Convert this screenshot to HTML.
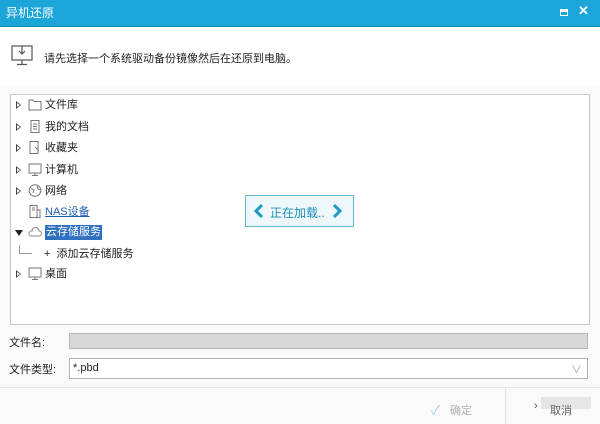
<!DOCTYPE html>
<html><head><meta charset="utf-8"><style>
*{margin:0;padding:0;box-sizing:border-box}
body{width:600px;height:424px;position:relative;overflow:hidden;background:#fff;font-family:"Liberation Sans","Noto Sans CJK SC",sans-serif;font-size:11px;color:#222}
.a{position:absolute}
.title{left:0;top:0;width:600px;height:27px;background:#1ba5d8;border-bottom:1px solid #1583b0;color:#fff;font-size:12px;line-height:26px;padding-left:6px}
.row{position:absolute;left:16px;height:18px;line-height:18px;white-space:nowrap}
.tri{position:absolute;left:0;top:5px;width:0;height:0;border-left:5px solid #444;border-top:4px solid transparent;border-bottom:4px solid transparent}
.tri:after{content:"";position:absolute;left:-4px;top:-2px;border-left:3px solid #fff;border-top:2px solid transparent;border-bottom:2px solid transparent}
.ic{position:absolute;left:12px;top:2px;width:14px;height:13px}
.tx{position:absolute;left:29px;top:0}
</style></head><body>
<div class="a title">异机还原</div>
<div class="a" style="left:560px;top:9px;width:8px;height:7px;border:1.5px solid #fff;border-top-width:3px"></div>
<div class="a" style="left:578px;top:3px;color:#fff;font-size:13px;font-weight:bold">✕</div>
<svg class="a" style="left:11px;top:44px" width="22" height="24" viewBox="0 0 22 24" fill="none" stroke="#555" stroke-width="1.2"><rect x="1" y="2" width="20" height="14"/><path d="M11 2v8M8 7l3 3 3-3M11 16v4M6 20.5h10"/></svg>
<div class="a" style="left:44px;top:50px;font-size:11px">请先选择一个系统驱动备份镜像然后在还原到电脑。</div>
<div class="a" style="left:0;top:86px;width:600px;height:338px;background:#fafafa"></div>
<div class="a" style="left:10px;top:94px;width:580px;height:231px;background:#fff;border:1px solid #c8c8c8"></div>
<div class="row" style="top:96px"><div class="tri"></div><svg class="ic" viewBox="0 0 14 13" fill="none" stroke="#777"><path d="M1 2h4l1 1.5h7V12H1z"/></svg><span class="tx">文件库</span></div>
<div class="row" style="top:118px"><div class="tri"></div><svg class="ic" viewBox="0 0 14 13" fill="none" stroke="#777"><path d="M3 .5h8v12H3zM5 4h4M5 6.5h4M5 9h4"/></svg><span class="tx">我的文档</span></div>
<div class="row" style="top:139px"><div class="tri"></div><svg class="ic" viewBox="0 0 14 13" fill="none" stroke="#777"><path d="M2 .5h8v12H2zM7 6l4 4"/></svg><span class="tx">收藏夹</span></div>
<div class="row" style="top:161px"><div class="tri"></div><svg class="ic" viewBox="0 0 14 13" fill="none" stroke="#777"><path d="M1 1h12v9H1zM7 10v2M4 12.5h6"/></svg><span class="tx">计算机</span></div>
<div class="row" style="top:182px"><div class="tri"></div><svg class="ic" viewBox="0 0 14 13" fill="none" stroke="#777"><circle cx="7" cy="6.5" r="5.8"/><path d="M3 4l3 2-1 3M9 2l1 3 2 1"/></svg><span class="tx">网络</span></div>
<div class="row" style="top:203px"><svg class="ic" viewBox="0 0 14 13" fill="none" stroke="#777"><path d="M2 .5h7v12H2zM9 5h3v7.5H9M4 3h3M4 5h3"/></svg><span class="tx" style="color:#1f5fb0;text-decoration:underline">NAS设备</span></div>
<div class="row" style="top:224px"><div class="a" style="left:-1px;top:6px;border-top:6px solid #222;border-left:4px solid transparent;border-right:4px solid transparent"></div><svg class="ic" viewBox="0 0 14 13" fill="none" stroke="#888"><path d="M3 10h8a2.5 2.5 0 0 0 0-5 3.5 3.5 0 0 0-7 0 2.5 2.5 0 0 0-1 5z"/></svg><span class="tx" style="background:#3070c0;color:#fff;padding:0 1px;line-height:15px;top:1px">云存储服务</span></div>
<div class="a" style="left:19px;top:245px;width:13px;height:9px;border-left:1px solid #999;border-bottom:1px solid #999"></div>
<div class="a" style="left:44px;top:245px;height:18px;line-height:18px">+&nbsp; 添加云存储服务</div>
<div class="row" style="top:265px"><div class="tri"></div><svg class="ic" viewBox="0 0 14 13" fill="none" stroke="#777"><path d="M1 1h12v9H1zM7 10v2M4 12.5h6"/></svg><span class="tx">桌面</span></div>
<div class="a" style="left:245px;top:195px;width:109px;height:32px;border:1px solid #6ab8cf;background:#eef8fc"></div>
<svg class="a" style="left:253px;top:203px" width="12" height="16" viewBox="0 0 12 16"><path d="M9 2L3 8l6 6" fill="none" stroke="#1a9cc4" stroke-width="3"/></svg>
<svg class="a" style="left:331px;top:203px" width="12" height="16" viewBox="0 0 12 16"><path d="M3 2l6 6-6 6" fill="none" stroke="#1a9cc4" stroke-width="3"/></svg>
<div class="a" style="left:270px;top:204px;color:#1a8fb8;font-size:12px">正在加载..</div>
<div class="a" style="left:9px;top:334px">文件名:</div>
<div class="a" style="left:69px;top:333px;width:519px;height:16px;background:#d8d8d8;border:1px solid #b8b8b8"></div>
<div class="a" style="left:9px;top:361px">文件类型:</div>
<div class="a" style="left:69px;top:358px;width:519px;height:21px;background:#fff;border:1px solid #b0b0b0;padding-left:3px;line-height:19px">*.pbd</div>
<div class="a" style="left:571px;top:361px;color:#aaa;font-size:11px">∨</div>
<div class="a" style="left:0;top:387px;width:600px;height:1px;background:#e4e4e4"></div>
<div class="a" style="left:505px;top:388px;width:1px;height:36px;background:#e4e4e4"></div>
<div class="a" style="left:431px;top:400px;color:#a8d6ea;font-size:13px">✓</div>
<div class="a" style="left:450px;top:402px;color:#b0b0b0">确定</div>
<div class="a" style="left:534px;top:400px;color:#555">›</div>
<div class="a" style="left:541px;top:397px;width:50px;height:12px;background:#e6e6e6"></div>
<div class="a" style="left:550px;top:402px;color:#666">取消</div>
</body></html>
